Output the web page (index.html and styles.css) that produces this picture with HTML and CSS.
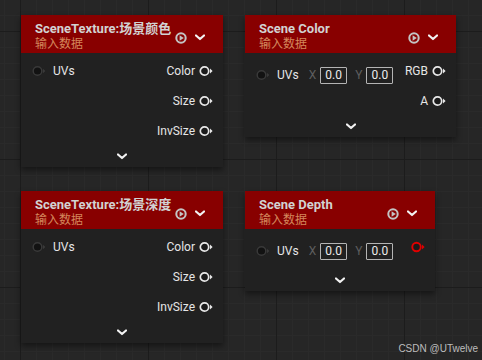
FILE: index.html
```html
<!DOCTYPE html>
<html>
<head>
<meta charset="utf-8">
<link rel="stylesheet" href="styles.css">
</head>
<body>
<svg width="0" height="0" class="defs">
  <defs>
    <g id="play"><circle cx="6" cy="6" r="4.7" fill="none" stroke="#c4c4c4" stroke-width="2"/><polygon points="4.6,3.3 8.8,6 4.6,8.7" fill="#c4c4c4"/></g>
    <g id="chev"><polyline points="1,1.5 5,5 9,1.5" fill="none" stroke="#f2f2f2" stroke-width="2.2" stroke-linecap="round" stroke-linejoin="round"/></g>
    <g id="pout"><circle cx="5.5" cy="6" r="4.2" fill="#1a1a1a" stroke="#e8e8e8" stroke-width="1.7"/><polygon points="11,3.6 13.6,6 11,8.4" fill="#e8e8e8"/></g>
    <g id="pred"><circle cx="5.5" cy="6" r="4.2" fill="#1a1a1a" stroke="#e00000" stroke-width="1.9"/><polygon points="11,3.6 13.6,6 11,8.4" fill="#e00000"/></g>
    <g id="pin"><circle cx="5.5" cy="6" r="4.3" fill="#121212" stroke="#3a3a3a" stroke-width="1.4"/><polygon points="11,3.8 13.4,6 11,8.2" fill="#3a3a3a"/></g>
  </defs>
</svg>
<div class="canvas">

  <div class="node w202">
    <div class="hdr">
      <div class="titles"><div class="title">SceneTexture:场景颜色</div><div class="sub">输入数据</div></div>
      <div class="hicons"><svg class="ico" width="12" height="12"><use href="#play"/></svg><svg class="ico" width="10" height="7"><use href="#chev"/></svg></div>
    </div>
    <div class="body">
      <div class="ins"><div class="in-row"><svg width="14" height="12"><use href="#pin"/></svg><span>UVs</span></div></div>
      <div class="outs">
        <div class="out"><span>Color</span><svg width="14" height="12"><use href="#pout"/></svg></div>
        <div class="out"><span>Size</span><svg width="14" height="12"><use href="#pout"/></svg></div>
        <div class="out"><span>InvSize</span><svg width="14" height="12"><use href="#pout"/></svg></div>
      </div>
    </div>
    <div class="foot"><svg width="10" height="7"><use href="#chev"/></svg></div>
  </div>

  <div class="node w211">
    <div class="hdr">
      <div class="titles"><div class="title">Scene Color</div><div class="sub">输入数据</div></div>
      <div class="hicons"><svg class="ico" width="12" height="12"><use href="#play"/></svg><svg class="ico" width="10" height="7"><use href="#chev"/></svg></div>
    </div>
    <div class="body">
      <div class="ins"><div class="in-row vec"><svg width="14" height="12"><use href="#pin"/></svg><span>UVs</span><span class="axis">X</span><span class="box">0.0</span><span class="axis y">Y</span><span class="box">0.0</span></div></div>
      <div class="outs">
        <div class="out"><span>RGB</span><svg width="14" height="12"><use href="#pout"/></svg></div>
        <div class="out"><span>A</span><svg width="14" height="12"><use href="#pout"/></svg></div>
      </div>
    </div>
    <div class="foot"><svg width="10" height="7"><use href="#chev"/></svg></div>
  </div>

  <div class="node w202">
    <div class="hdr">
      <div class="titles"><div class="title">SceneTexture:场景深度</div><div class="sub">输入数据</div></div>
      <div class="hicons"><svg class="ico" width="12" height="12"><use href="#play"/></svg><svg class="ico" width="10" height="7"><use href="#chev"/></svg></div>
    </div>
    <div class="body">
      <div class="ins"><div class="in-row"><svg width="14" height="12"><use href="#pin"/></svg><span>UVs</span></div></div>
      <div class="outs">
        <div class="out"><span>Color</span><svg width="14" height="12"><use href="#pout"/></svg></div>
        <div class="out"><span>Size</span><svg width="14" height="12"><use href="#pout"/></svg></div>
        <div class="out"><span>InvSize</span><svg width="14" height="12"><use href="#pout"/></svg></div>
      </div>
    </div>
    <div class="foot"><svg width="10" height="7"><use href="#chev"/></svg></div>
  </div>

  <div class="node w190">
    <div class="hdr">
      <div class="titles"><div class="title">Scene Depth</div><div class="sub">输入数据</div></div>
      <div class="hicons"><svg class="ico" width="12" height="12"><use href="#play"/></svg><svg class="ico" width="10" height="7"><use href="#chev"/></svg></div>
    </div>
    <div class="body">
      <div class="ins"><div class="in-row vec"><svg width="14" height="12"><use href="#pin"/></svg><span>UVs</span><span class="axis">X</span><span class="box">0.0</span><span class="axis y">Y</span><span class="box">0.0</span></div></div>
      <div class="outs">
        <div class="out"><svg width="14" height="12"><use href="#pred"/></svg></div>
      </div>
    </div>
    <div class="foot"><svg width="10" height="7"><use href="#chev"/></svg></div>
  </div>

</div>
<div class="watermark">CSDN @UTwelve</div>
</body>
</html>
```
FILE: styles.css
```css
html, body {
  margin: 0;
  padding: 0;
  width: 482px;
  height: 360px;
  overflow: hidden;
}
body {
  position: relative;
  font-family: Roboto, "Noto Sans CJK SC", sans-serif;
  background-color: #262626;
  background-image:
    linear-gradient(to right, #1c1c1c 0, #1c1c1c 1px, transparent 1px),
    linear-gradient(to bottom, #1c1c1c 0, #1c1c1c 1px, transparent 1px),
    linear-gradient(to right, #2a2a2a 0, #2a2a2a 1px, transparent 1px),
    linear-gradient(to bottom, #2a2a2a 0, #2a2a2a 1px, transparent 1px);
  background-size: 128px 128px, 128px 128px, 16px 16px, 16px 16px;
  background-position: 20px 0, 0 31px, 4px 0, 0 15px;
}
.defs { position: absolute; }
.canvas {
  display: grid;
  grid-template-columns: 202px 211px;
  column-gap: 22px;
  row-gap: 24px;
  padding: 15px 0 0 21px;
  align-items: start;
}
.node {
  background: #212121;
  box-shadow: 0 3px 6px rgba(0, 0, 0, 0.45);
  padding-bottom: 1px;
}
.w202 { width: 202px; }
.w211 { width: 211px; }
.w190 { width: 190px; }
.hdr {
  height: 38px;
  box-sizing: border-box;
  background: #880000;
  display: flex;
  justify-content: space-between;
  padding: 6px 18px 0 14px;
}
.title {
  font-size: 13px;
  font-weight: bold;
  line-height: 15px;
  color: #d2d2d2;
  white-space: nowrap;
}
.sub {
  font-size: 12px;
  line-height: 16px;
  color: #d4875c;
  white-space: nowrap;
}
.hicons {
  display: flex;
  align-items: center;
  gap: 8px;
  margin-top: 1px;
}
.ico { display: block; }
.body {
  display: flex;
  justify-content: space-between;
  padding-top: 3px;
}
.ins { padding-left: 11px; }
.in-row {
  height: 30px;
  display: flex;
  align-items: center;
  gap: 7px;
  font-size: 12px;
  color: #e6e6e6;
}
.in-row.vec { height: 38px; }
.in-row svg, .out svg { display: block; }
.axis {
  color: #5e5e5e;
  font-size: 12px;
  margin-left: 3px;
  margin-right: -3px;
}
.axis.y { margin-left: 1px; }
.box {
  width: 25px;
  height: 15px;
  border: 1px solid #b4b4b4;
  border-radius: 1px;
  display: flex;
  align-items: center;
  justify-content: center;
  font-size: 12px;
  color: #ececec;
}
.outs { padding-right: 10px; }
.out {
  height: 30px;
  display: flex;
  align-items: center;
  justify-content: flex-end;
  gap: 4px;
  font-size: 12px;
  color: #e6e6e6;
}
.foot {
  height: 20px;
  display: flex;
  align-items: center;
  justify-content: center;
}
.watermark {
  position: absolute;
  right: 4px;
  bottom: 6px;
  font-family: "Liberation Sans", Arial, sans-serif;
  font-size: 10px;
  color: #bdbdbd;
}
```
